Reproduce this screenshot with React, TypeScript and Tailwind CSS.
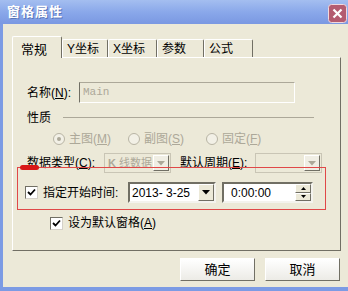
import React from 'react';

const font = { fontFamily: '"Liberation Sans", "Noto Sans CJK SC", sans-serif' };

const Tab: React.FC<{ label: string; w: string; active?: boolean }> = ({ label, w, active }) =>
  active ? (
    <div className={`${w} h-[22px] -mb-px z-10 bg-[#ECE9D8] border-t border-l border-white border-r border-r-[#716F64] rounded-t-[2px] flex items-start pt-[3px] pl-[8px] text-[13px] text-black`}>
      {label}
    </div>
  ) : (
    <div className={`${w} h-[18px] mt-[3px] bg-[#ECE9D8] border-t border-l border-white border-r border-r-[#716F64] rounded-t-[2px] flex items-center pl-[4px] text-[12px] text-black`}>
      {label}
    </div>
  );

const Radio: React.FC<{ checked?: boolean }> = ({ checked }) => (
  <span className="w-[12px] h-[12px] rounded-full border border-[#B8B4A4] bg-[#F2F0E6] flex items-center justify-center">
    {checked && <span className="w-[4px] h-[4px] rounded-full bg-[#ACA899]" />}
  </span>
);

const Check: React.FC = () => (
  <span className="w-[13px] h-[13px] bg-white border border-t-[#716F64] border-l-[#716F64] border-r-[#D4D0C8] border-b-[#D4D0C8] flex items-center justify-center">
    <svg width="9" height="9" viewBox="0 0 9 9">
      <path d="M1 4 L3.5 6.5 L8 1.5" stroke="#000" strokeWidth="1.8" fill="none" />
    </svg>
  </span>
);

const DropBtn: React.FC<{ disabled?: boolean }> = ({ disabled }) => (
  <span className={`w-[16px] h-full shrink-0 flex items-center justify-center border border-t-white border-l-white border-r-[#716F64] border-b-[#716F64] ${disabled ? 'bg-[#F0EEE4]' : 'bg-[#ECE9D8]'}`}>
    <svg width="8" height="5" viewBox="0 0 8 5">
      <path d="M0 0 H8 L4 4.5 Z" fill={disabled ? '#ACA899' : '#000'} />
    </svg>
  </span>
);

const U: React.FC<{ c: string }> = ({ c }) => (
  <span>
    (<span className="underline">{c}</span>)
  </span>
);

export default function App() {
  return (
    <div
      className="w-[348px] h-[291px] bg-[#ECE9D8] border-b-[4px] border-[#7C9BE4] flex flex-col overflow-hidden text-[12px] text-black whitespace-nowrap"
      style={font}
    >
      <div className="h-[24px] w-[348px] shrink-0 bg-gradient-to-b from-[#A4BEF0] via-[#8AA8EA] to-[#7A98E2] flex items-center justify-between pl-[7px] pr-[1px]">
        <span className="text-white font-bold text-[13px] tracking-[1px] [text-shadow:1px_1px_0_#5A75B8]">窗格属性</span>
        <svg width="19" height="19" viewBox="0 0 19 19" className="mt-[2px]">
          <rect x="0.5" y="0.5" width="18" height="18" rx="3" fill="#B45C70" stroke="#F0D8DE" />
          <path d="M5.5 5.5 L13.5 13.5 M13.5 5.5 L5.5 13.5" stroke="#fff" strokeWidth="2.2" />
        </svg>
      </div>

      <div className="flex-1 flex border-l-[3px] border-[#7C9BE4]">
        <div className="pl-[9px] pt-[12px] flex flex-col">
          <div className="flex items-start h-[21px]">
            <Tab label="常规" w="w-[50px]" active />
            <Tab label="Y坐标" w="w-[46px]" />
            <Tab label="X坐标" w="w-[49px]" />
            <Tab label="参数" w="w-[47px]" />
            <Tab label="公式" w="w-[49px]" />
          </div>

          <div className="relative w-[329px] h-[194px] border-t border-l border-white border-r border-r-[#716F64] border-b border-b-[#716F64] flex flex-col">
            <div className="mt-[24px] flex items-center h-[21px] pl-[14px]">
              <span className="w-[52px]">名称<U c="N" />:</span>
              <span className="w-[216px] h-[21px] border border-t-[#ACA899] border-l-[#716F64] border-r-[#FFFFFF] border-b-[#FFFFFF] bg-[#ECE9D8] flex items-center pl-[3px] text-[#ACA899] text-[11px]" style={{ fontFamily: '"Liberation Mono", monospace' }}>
                Main
              </span>
            </div>

            <div className="mt-[7px] flex items-center h-[16px] pl-[14px]">
              <span className="w-[36px]">性质</span>
              <span className="w-[251px] h-[2px] border-t border-[#ACA899] border-b-white" />
            </div>

            <div className="mt-[5px] flex items-center h-[16px] pl-[40px] text-[#ACA899] gap-[4px]">
              <Radio checked />
              <span className="w-[55px]">主图<U c="M" /></span>
              <Radio />
              <span className="w-[58px]">副图<U c="S" /></span>
              <Radio />
              <span>固定<U c="F" /></span>
            </div>

            <div className="mt-[6px] flex items-center h-[20px] pl-[14px]">
              <span className="w-[77px]">数据类型<U c="C" />:</span>
              <span className="w-[67px] h-[20px] border border-[#C9C5B5] bg-[#ECE9D8] flex items-center justify-between pl-[3px] pr-px py-px text-[#ACA899] text-[11px]">
                <span><b>K</b> 线数据</span>
                <DropBtn disabled />
              </span>
              <span className="ml-[9px] w-[75px]">默认周期<U c="E" />:</span>
              <span className="w-[67px] h-[20px] border border-[#C9C5B5] bg-[#ECE9D8] flex items-center justify-end pr-px py-px">
                <DropBtn disabled />
              </span>
            </div>

            <div className="mt-[9px] flex items-center h-[21px] pl-[12px]">
              <Check />
              <span className="ml-[5px] w-[85px]">指定开始时间:</span>
              <span className="w-[88px] h-[21px] bg-white border-2 border-t-[#716F64] border-l-[#716F64] border-r-[#F4F3EE] border-b-[#F4F3EE] flex items-center justify-between pl-[2px]">
                <span>2013- 3-25</span>
                <DropBtn />
              </span>
              <span className="ml-[6px] w-[91px] h-[21px] bg-white border-2 border-t-[#716F64] border-l-[#716F64] border-r-[#F4F3EE] border-b-[#F4F3EE] flex items-center justify-between pl-[7px]">
                <span>0:00:00</span>
                <span className="w-[16px] h-full flex flex-col">
                  <span className="flex-1 bg-[#ECE9D8] border border-t-white border-l-white border-r-[#716F64] border-b-[#716F64] flex items-center justify-center">
                    <svg width="5" height="3" viewBox="0 0 5 3"><path d="M2.5 0 L5 3 H0 Z" fill="#000" /></svg>
                  </span>
                  <span className="flex-1 bg-[#ECE9D8] border border-t-white border-l-white border-r-[#716F64] border-b-[#716F64] flex items-center justify-center">
                    <svg width="5" height="3" viewBox="0 0 5 3"><path d="M0 0 H5 L2.5 3 Z" fill="#000" /></svg>
                  </span>
                </span>
              </span>
            </div>

            <div className="mt-[12px] flex items-center h-[16px] pl-[37px]">
              <Check />
              <span className="ml-[5px]">设为默认窗格<U c="A" /></span>
            </div>

            <span className="absolute left-[4px] top-[109px] w-[309px] h-[43px] border border-[#E04848]" />
            <span className="absolute left-[7px] top-[107px] w-[19px] h-[5px] rounded-full bg-[#D81818]" />
          </div>

          <div className="mt-[7px] flex gap-[10px] pl-[168px]">
            <button className="w-[75px] h-[23px] bg-gradient-to-b from-[#FFFFFF] to-[#ECEBE6] border border-t-white border-l-white border-r-[#716F64] border-b-[#716F64] text-[13px]">确定</button>
            <button className="w-[75px] h-[23px] bg-gradient-to-b from-[#FFFFFF] to-[#ECEBE6] border border-t-white border-l-white border-r-[#716F64] border-b-[#716F64] text-[13px]">取消</button>
          </div>
        </div>
      </div>
    </div>
  );
}
